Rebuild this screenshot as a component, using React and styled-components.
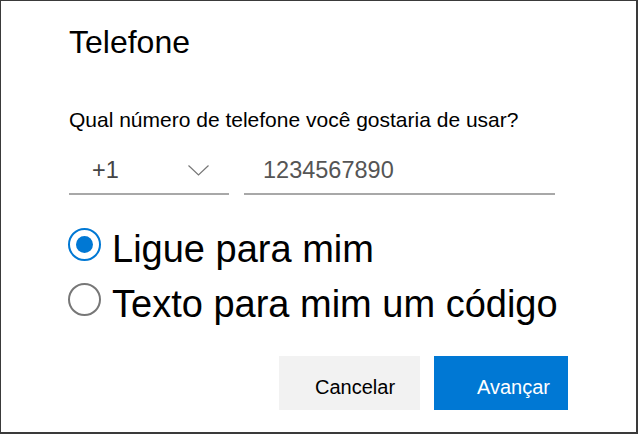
import React, { useState } from "react";
import styled, { createGlobalStyle } from "styled-components";

const GlobalStyle = createGlobalStyle`
  body {
    margin: 0;
    background: #ffffff;
    font-family: "Liberation Sans", Arial, sans-serif;
  }
`;

const Dialog = styled.div`
  box-sizing: border-box;
  width: 638px;
  height: 434px;
  background: #ffffff;
  border-style: solid;
  border-color: #3a3a3a;
  border-width: 1px 2px 2px 1px;
  padding: 23px 68px 0 67px;
  display: flex;
  flex-direction: column;
`;

const Title = styled.h1`
  margin: 0 0 0 1px;
  font-size: 32px;
  line-height: 36px;
  font-weight: 400;
  color: #000;
`;

const Question = styled.p`
  margin: 48px 0 0 1px;
  font-size: 21px;
  line-height: 24px;
  color: #000;
`;

const InputRow = styled.div`
  display: flex;
  gap: 15px;
  margin: 23px 0 0 1px;
`;

const Field = styled.div`
  box-sizing: border-box;
  width: ${(p) => p.$width}px;
  height: 40px;
  padding: 0 20px 8px ${(p) => p.$padLeft}px;
  border-bottom: 2px solid #a8a8a8;
  display: flex;
  align-items: flex-start;
  justify-content: space-between;
  font-size: 23.5px;
  line-height: 30px;
  color: ${(p) => p.$color};
`;

const Chevron = styled.svg`
  width: 21px;
  height: 11px;
  margin-top: 10px;
`;

const Options = styled.div`
  display: flex;
  flex-direction: column;
  margin-top: 27px;
`;

const Option = styled.label`
  display: flex;
  align-items: flex-start;
  gap: 11px;
  font-size: 38px;
  line-height: 55px;
  color: #000;
  cursor: pointer;
`;

const Circle = styled.span`
  box-sizing: border-box;
  flex: none;
  width: 33px;
  height: 33px;
  margin-top: 6px;
  border-radius: 50%;
  border: 2px solid ${(p) => (p.$checked ? "#0078d4" : "#777777")};
  display: flex;
  align-items: center;
  justify-content: center;
  &::after {
    content: "";
    width: 17px;
    height: 17px;
    border-radius: 50%;
    background: ${(p) => (p.$checked ? "#0078d4" : "transparent")};
  }
`;

const Actions = styled.div`
  display: flex;
  justify-content: flex-end;
  gap: 14px;
  margin-top: 24px;
`;

const Button = styled.button`
  box-sizing: border-box;
  width: ${(p) => p.$width}px;
  height: 54px;
  padding: 8px 0 0 ${(p) => p.$padLeft}px;
  border: none;
  text-align: left;
  font-family: "Liberation Sans", Arial, sans-serif;
  font-size: 20px;
  line-height: 46px;
  background: ${(p) => (p.$primary ? "#0078d4" : "#f2f2f2")};
  color: ${(p) => (p.$primary ? "#ffffff" : "#000000")};
  cursor: pointer;
`;

export default function App() {
  const [choice, setChoice] = useState("call");
  const options = [
    { id: "call", label: "Ligue para mim" },
    { id: "text", label: "Texto para mim um código" },
  ];

  return (
    <>
      <GlobalStyle />
      <Dialog>
        <Title>Telefone</Title>
        <Question>Qual número de telefone você gostaria de usar?</Question>
        <InputRow>
          <Field $width={160} $padLeft={23} $color="#444">
            <span>+1</span>
            <Chevron viewBox="0 0 21 11">
              <polyline points="0.5,0.5 10.5,10 20.5,0.5" fill="none" stroke="#777" strokeWidth="1.2" />
            </Chevron>
          </Field>
          <Field $width={311} $padLeft={19} $color="#555">
            <span>1234567890</span>
          </Field>
        </InputRow>
        <Options>
          {options.map((o) => (
            <Option key={o.id} onClick={() => setChoice(o.id)}>
              <Circle $checked={choice === o.id} />
              <span>{o.label}</span>
            </Option>
          ))}
        </Options>
        <Actions>
          <Button $width={141} $padLeft={36}>Cancelar</Button>
          <Button $width={134} $padLeft={43} $primary>Avançar</Button>
        </Actions>
      </Dialog>
    </>
  );
}
